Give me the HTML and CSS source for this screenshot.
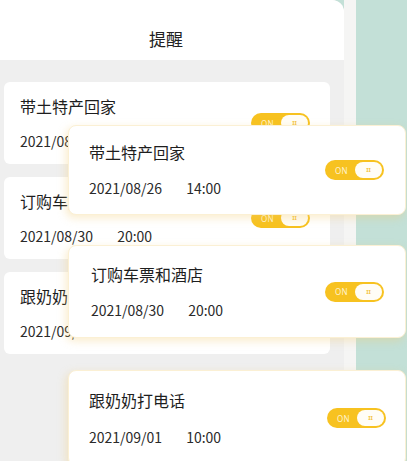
FILE: index.html
```html
<!DOCTYPE html>
<html lang="zh">
<head>
<meta charset="utf-8">
<link rel="stylesheet" href="styles.css">
</head>
<body>
<div class="stage">
  <div class="panel">
    <header class="header">提醒</header>
    <div class="list">
      <div class="card">
        <div class="info">
          <div class="title">带土特产回家</div>
          <div class="date"><span>2021/08/26</span><span>14:00</span></div>
        </div>
        <div class="toggle"><span class="on">ON</span><span class="knob">II</span></div>
      </div>
      <div class="card">
        <div class="info">
          <div class="title">订购车票和酒店</div>
          <div class="date"><span>2021/08/30</span><span>20:00</span></div>
        </div>
        <div class="toggle"><span class="on">ON</span><span class="knob">II</span></div>
      </div>
      <div class="card">
        <div class="info">
          <div class="title">跟奶奶打电话</div>
          <div class="date"><span>2021/09/01</span><span>10:00</span></div>
        </div>
        <div class="toggle"><span class="on">ON</span><span class="knob">II</span></div>
      </div>
    </div>
  </div>
  <div class="strip"></div>
  <div class="mint"></div>

  <div class="card float float-a">
    <div class="info">
      <div class="title">带土特产回家</div>
      <div class="date"><span>2021/08/26</span><span>14:00</span></div>
    </div>
    <div class="toggle"><span class="on">ON</span><span class="knob">II</span></div>
  </div>
  <div class="card float float-b">
    <div class="info">
      <div class="title">订购车票和酒店</div>
      <div class="date"><span>2021/08/30</span><span>20:00</span></div>
    </div>
    <div class="toggle"><span class="on">ON</span><span class="knob">II</span></div>
  </div>
  <div class="card float float-c">
    <div class="info">
      <div class="title">跟奶奶打电话</div>
      <div class="date"><span>2021/09/01</span><span>10:00</span></div>
    </div>
    <div class="toggle"><span class="on">ON</span><span class="knob">II</span></div>
  </div>
</div>
</body>
</html>
```

FILE: styles.css
```css
* { box-sizing: border-box; }
html, body {
  margin: 0;
  padding: 0;
  width: 407px;
  height: 461px;
  overflow: hidden;
  font-family: "Noto Sans CJK SC", "Noto Sans", sans-serif;
  background: #c3e0d7;
}
.stage {
  position: relative;
  display: flex;
  width: 407px;
  height: 461px;
}
.panel {
  width: 344px;
  height: 461px;
  background: #efefef;
  border-top-right-radius: 12px;
  overflow: hidden;
}
.strip {
  width: 12px;
  background: #f5f5f4;
}
.mint {
  flex: 1;
  background: #c3e0d7;
}
.header {
  height: 60px;
  background: #fff;
  display: flex;
  align-items: center;
  justify-content: center;
  padding-top: 17px;
  padding-right: 12px;
  font-size: 17px;
  color: #222;
}
.list {
  display: flex;
  flex-direction: column;
  gap: 13px;
  padding: 22px 14px 0 4px;
}
.card {
  height: 82px;
  background: #fff;
  border-radius: 6px;
  display: flex;
  align-items: center;
  justify-content: space-between;
  padding: 0 20px 0 16px;
}
.info {
  display: flex;
  flex-direction: column;
  gap: 15px;
}
.title {
  font-size: 16px;
  line-height: 20px;
  color: #1e1e1e;
}
.date {
  display: flex;
  gap: 24px;
  font-size: 14px;
  line-height: 20px;
  color: #2a2a2a;
}
.toggle {
  width: 59px;
  height: 20px;
  border-radius: 10px;
  background: #f7c220;
  display: flex;
  align-items: center;
  justify-content: space-between;
  padding: 0 2px 0 10px;
}
.on {
  font-family: "Noto Sans", sans-serif;
  font-size: 8px;
  color: #fff4d0;
  letter-spacing: 0.3px;
}
.knob {
  width: 27px;
  height: 16px;
  border-radius: 8px;
  background: #fffdf6;
  color: #f4c547;
  font-family: "Noto Sans", sans-serif;
  font-size: 6px;
  font-weight: bold;
  display: flex;
  align-items: center;
  justify-content: center;
}
.float {
  position: absolute;
  left: 68px;
  width: 338px;
  border-radius: 8px;
  padding: 0 21px 0 20px;
  border: 1px solid #fbf0d4;
  box-shadow: -2px 3px 8px rgba(240, 200, 110, 0.35);
}
.float .info { gap: 16px; }
.float-a { top: 125px; height: 90px; }
.float-b { top: 245px; height: 93px; }
.float-b .title { padding-left: 2px; }
.float-b .date { padding-left: 2px; }
.float-c { top: 370px; height: 96px; padding-right: 19px; }
.float-c .info { gap: 17px; }
```
